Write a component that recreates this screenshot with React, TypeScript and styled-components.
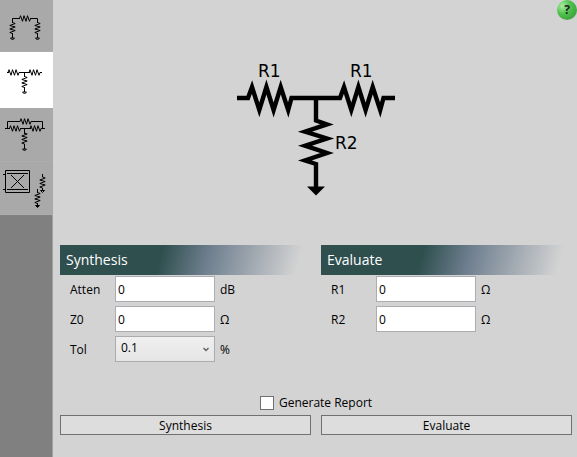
import React, { useState } from "react";
import styled, { createGlobalStyle } from "styled-components";

const GlobalStyle = createGlobalStyle`
  * { box-sizing: border-box; }
  body {
    margin: 0;
    background: #d3d3d3;
    color: #000;
    font: 12px/16px "Open Sans", "Noto Sans", sans-serif;
  }
  button, input, select { font: inherit; color: inherit; }
`;

const Page = styled.div`
  position: relative;
  display: flex;
  min-height: 100vh;
`;

const Sidebar = styled.nav`
  display: flex;
  flex-direction: column;
  flex: none;
  width: 53px;
  background: linear-gradient(to right, #808080 52px, #a0a0a0 52px);
`;

const NetworkTab = styled.button<{ $active: boolean }>`
  display: flex;
  align-items: flex-start;
  width: 100%;
  height: ${(p) => (p.$active ? 56 : 54)}px;
  padding: 0;
  border: 0;
  border-bottom: 1px solid ${(p) => (p.$active ? "#fff" : "#adadad")};
  background: ${(p) => (p.$active ? "#fff" : "#a9a9a9")};

  &:first-child { height: 52px; }
  &:last-child { height: 53px; }
`;

const Main = styled.main`
  display: flex;
  flex-direction: column;
  flex: 1;
  min-width: 0;
  padding: 60px 5px 20px 7px;
`;

const Diagram = styled.svg`
  align-self: center;
  flex: none;
  margin-bottom: 49px;
  text {
    font: 17px "DejaVu Sans", sans-serif;
  }
`;

const Columns = styled.div`
  display: grid;
  grid-template-columns: 1fr 1fr;
  column-gap: 10px;
`;

const Panel = styled.section`
  display: flex;
  flex-direction: column;
  gap: 1px;
`;

const PanelTitle = styled.h2`
  height: 30px;
  margin: 0;
  padding: 0 6px;
  font: 500 14px/30px "Open Sans", "Noto Sans", sans-serif;
  color: #fff;
  background: linear-gradient(105deg, #2f4f4f 40%, #708090 59%, #d3d3d3 94%);
`;

const Fields = styled.div`
  display: flex;
  flex-direction: column;
  gap: 4px;
  padding-left: 10px;
`;

const FieldRow = styled.div`
  display: grid;
  grid-template-columns: 45px 100px 1fr;
  align-items: center;
  height: 26px;
`;

const FieldLabel = styled.label`
  padding-top: 2px;
`;

const Unit = styled.span`
  padding: 2px 0 0 5px;
`;

const TextInput = styled.input`
  width: 100%;
  height: 26px;
  padding: 1px 2px 0;
  border: 1px solid #abadb3;
  border-radius: 0;
  background: #fff;
`;

const SelectBox = styled.div`
  position: relative;
  svg {
    position: absolute;
    right: 6px;
    top: 11px;
    pointer-events: none;
  }
`;

const Select = styled.select`
  display: block;
  appearance: none;
  width: 100%;
  height: 26px;
  padding: 0 20px 2px 5px;
  border: 1px solid #acacac;
  border-radius: 0;
  background: linear-gradient(#f0f0f0, #e5e5e5);
`;

const ReportOption = styled.label`
  display: flex;
  align-items: center;
  align-self: center;
  gap: 5px;
  height: 16px;
  margin: 33px 0 4px;
`;

const CheckBox = styled.input`
  appearance: none;
  width: 14px;
  height: 14px;
  margin: 0;
  border: 1px solid #707070;
  background: #fff;
  &:checked { box-shadow: inset 0 0 0 3px #fff; background: #212121; }
`;

const ActionButton = styled.button`
  height: 20px;
  padding: 1px 0 0;
  border: 1px solid #707070;
  background: #ddd;
  line-height: 16px;
`;

const HelpButton = styled.button`
  position: absolute;
  top: 0;
  right: 0;
  width: 20px;
  height: 20px;
  padding: 0;
  border: 0;
  border-radius: 50%;
  background: radial-gradient(circle at 28% 30%, #a8eda0, #4fc04c 40%, #43a843 70%, #3f9f42);
  color: #222;
  font: bold 12px/20px "Open Sans", sans-serif;
`;

const ground = (x: number, y: number) => `M${x - 2} ${y}h4l-2 2z`;
const hRes = (x: number, y: number) =>
  `M${x} ${y}l1 -2.8l2 5.6l1.5 -5.6l2 5.6l1.5 -5.6l2 5.6l1 -2.8`;
const vRes = (x: number, y: number) =>
  `M${x} ${y}l2.7 1l-5.4 2l5.4 1.5l-5.4 2l5.4 1.5l-5.4 2l2.7 1`;

const iconPaths: Record<string, string[]> = {
  "Pi attenuator": [
    "M12.5 23V18.5H20M30 18.5H37.5V23M12.5 33V38M37.5 33V38",
    hRes(19.5, 18.5), vRes(12.5, 22.5), vRes(37.5, 22.5),
    ground(12.5, 38), ground(37.5, 38),
  ],
  "Tee attenuator": [
    "M7 20.5H9M19 20.5H30M40 20.5H42M24.5 20.5V25M24.5 35V40",
    hRes(8, 20.5), hRes(29, 20.5), vRes(24.5, 24.5), ground(24.5, 40),
  ],
  "Bridged tee attenuator": [
    "M5 20.5H10M20 20.5H31M41 20.5H45M7.5 20.5V13.5H20M31 13.5H42.5V20.5M24.5 20.5V26M24.5 36V41",
    hRes(20, 13.5), hRes(9.5, 20.5), hRes(30, 20.5), vRes(24.5, 25), ground(24.5, 41),
  ],
  "Reflection attenuator": [
    "M5.5 8.5H29.5V30.5H5.5ZM3 12.5H5M3 27.5H5M7 11.5H28M7 27.5H28M11 13L24 26M24 13L11 26",
    "M42.5 12V15M42.5 26V29M37.5 27V31M37.5 41V45",
    vRes(42.5, 15), vRes(37.5, 30.5), ground(42.5, 28.5), ground(37.5, 43.5),
  ],
};

function NetworkIcon({ name }: { name: string }) {
  return (
    <svg width="53" height="50" viewBox="0 0 53 50" fill="none" stroke="#000" aria-hidden="true">
      {iconPaths[name].map((d) => <path key={d} d={d} />)}
    </svg>
  );
}

function TeeDiagram() {
  return (
    <Diagram width="160" height="136" viewBox="0 0 160 136" role="img" aria-label="Tee attenuator circuit">
      <g fill="none" stroke="#000" strokeWidth="4.4" strokeMiterlimit="10">
        <path d="M1 38H12L16 27L23.3 50L30.4 27L37.6 50L44.7 27L52.2 50L55.5 38H104L108 27L115.3 50L122.4 27L129.6 50L136.7 27L144.2 50L147.5 38H159" />
        <path d="M80 38V60.5L91 64.4L69 71.6L91 78.5L69 85.7L91 93L69 100.5L80 104V128" />
      </g>
      <path d="M71 126.5H89L80 135.5Z" />
      <text x="22" y="17">R1</text>
      <text x="114" y="17">R1</text>
      <text x="99" y="89">R2</text>
    </Diagram>
  );
}

function NumberField({ id, label, unit }: { id: string; label: string; unit: string }) {
  const [value, setValue] = useState("0");
  return (
    <FieldRow>
      <FieldLabel htmlFor={id}>{label}</FieldLabel>
      <TextInput id={id} value={value} onChange={(e) => setValue(e.target.value)} />
      <Unit>{unit}</Unit>
    </FieldRow>
  );
}

export default function App() {
  const [active, setActive] = useState("Tee attenuator");
  return (
    <>
      <GlobalStyle />
      <Page>
        <Sidebar>
          {Object.keys(iconPaths).map((name) => (
            <NetworkTab
              key={name}
              aria-label={name}
              $active={name === active}
              onClick={() => setActive(name)}
            >
              <NetworkIcon name={name} />
            </NetworkTab>
          ))}
        </Sidebar>
        <Main>
          <TeeDiagram />
          <Columns>
            <Panel>
              <PanelTitle>Synthesis</PanelTitle>
              <Fields>
                <NumberField id="atten" label="Atten" unit="dB" />
                <NumberField id="z0" label="Z0" unit="Ω" />
                <FieldRow>
                  <FieldLabel htmlFor="tol">Tol</FieldLabel>
                  <SelectBox>
                    <Select id="tol" defaultValue="0.1">
                      <option>0.1</option>
                      <option>1</option>
                      <option>5</option>
                    </Select>
                    <svg width="6" height="5" viewBox="0 0 6 5" aria-hidden="true">
                      <path d="M0.5 1L3 3.5L5.5 1" fill="none" stroke="#606060" strokeWidth="1.4" />
                    </svg>
                  </SelectBox>
                  <Unit>%</Unit>
                </FieldRow>
              </Fields>
            </Panel>
            <Panel>
              <PanelTitle>Evaluate</PanelTitle>
              <Fields>
                <NumberField id="r1" label="R1" unit="Ω" />
                <NumberField id="r2" label="R2" unit="Ω" />
              </Fields>
            </Panel>
          </Columns>
          <ReportOption>
            <CheckBox type="checkbox" />
            Generate Report
          </ReportOption>
          <Columns>
            <ActionButton>Synthesis</ActionButton>
            <ActionButton>Evaluate</ActionButton>
          </Columns>
        </Main>
        <HelpButton aria-label="Help">?</HelpButton>
      </Page>
    </>
  );
}
